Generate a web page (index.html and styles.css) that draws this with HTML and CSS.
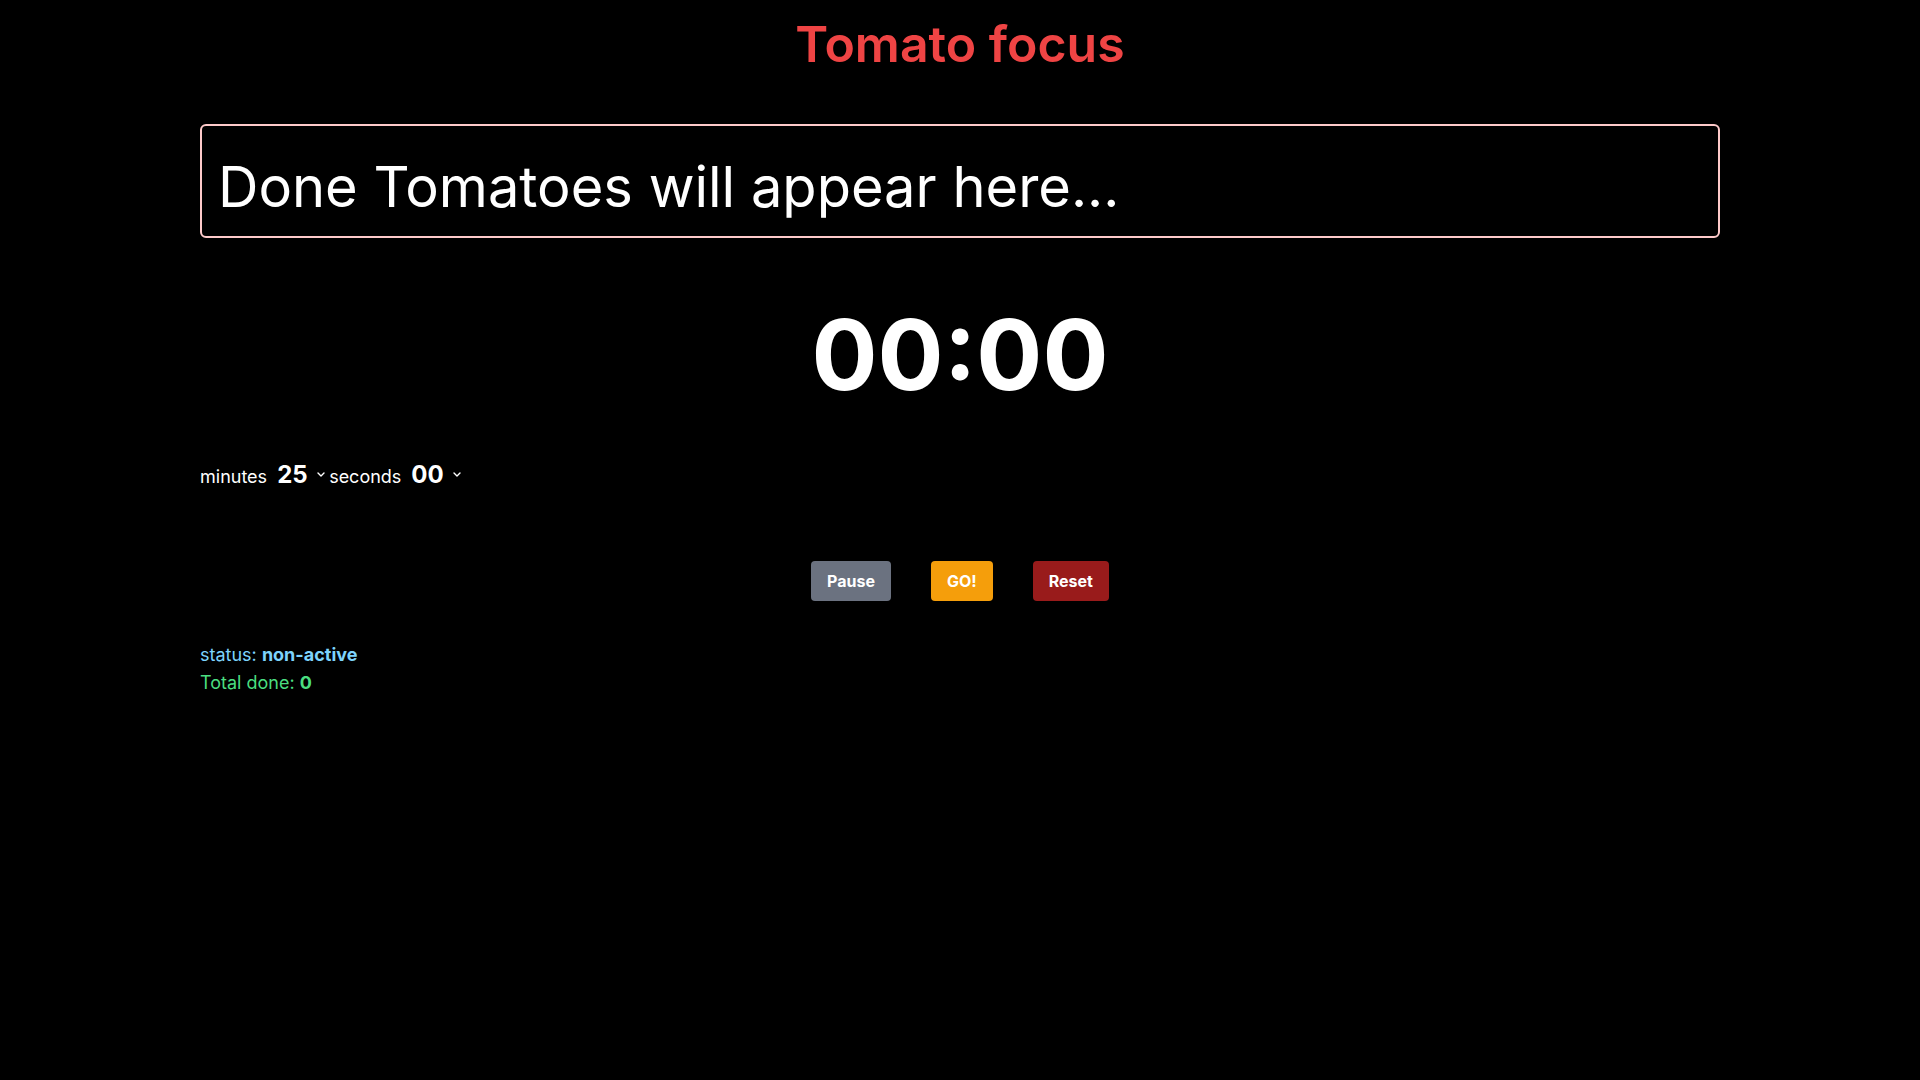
FILE: index.html
```html
<!DOCTYPE html>
<html lang="en">
<head>
<meta charset="utf-8">
<title>Tomato focus</title>
<link rel="stylesheet" href="styles.css">
</head>
<body>
<main class="page">
  <h1 class="title">Tomato focus</h1>
  <div class="done-box">Done Tomatoes will appear here...</div>
  <div class="timer">00:00</div>
  <div class="setters">
    <label class="lbl" for="min">minutes</label>
    <span class="sel-wrap">
      <select id="min" class="sel"><option>25</option></select>
      <svg class="chev" width="8" height="5" viewBox="0 0 8 5"><path d="M1 1l3 3 3-3" fill="none" stroke="#fff" stroke-width="1.4" stroke-linecap="round" stroke-linejoin="round"/></svg>
    </span>
    <label class="lbl" for="sec">seconds</label>
    <span class="sel-wrap">
      <select id="sec" class="sel"><option>00</option></select>
      <svg class="chev" width="8" height="5" viewBox="0 0 8 5"><path d="M1 1l3 3 3-3" fill="none" stroke="#fff" stroke-width="1.4" stroke-linecap="round" stroke-linejoin="round"/></svg>
    </span>
  </div>
  <div class="buttons">
    <button class="btn btn-pause">Pause</button>
    <button class="btn btn-go">GO!</button>
    <button class="btn btn-reset">Reset</button>
  </div>
  <div class="info">
    <p class="status">status: <b>non-active</b></p>
    <p class="total">Total done: <b>0</b></p>
  </div>
</main>
</body>
</html>
```
FILE: styles.css
```css
html, body {
  margin: 0;
  padding: 0;
  background: #000;
  color: #fff;
  font-family: Inter, "Noto Sans", sans-serif;
}
.page {
  width: 1520px;
  margin: 0 auto;
  padding-top: 19px;
}
.title {
  margin: 0;
  text-align: center;
  font-size: 50px;
  line-height: 51px;
  font-weight: 600;
  color: #ef4444;
}
.done-box {
  margin-top: 54px;
  box-sizing: content-box;
  height: 98px;
  padding: 12px 16px 0;
  border: 2px solid #fecaca;
  border-radius: 6px;
  font-size: 56px;
  line-height: 64px;
  display: flex;
  align-items: center;
}
.timer {
  margin-top: 68px;
  text-align: center;
  font-size: 98px;
  line-height: 98px;
  font-weight: 700;
}
.setters {
  margin-top: 55px;
  height: 32px;
  display: flex;
  align-items: baseline;
}
.lbl {
  font-size: 18px;
  line-height: 32px;
}
.sel-wrap {
  display: inline-flex;
  align-items: center;
  margin-left: 10px;
  margin-right: 4px;
}
.sel {
  appearance: none;
  -webkit-appearance: none;
  background: transparent;
  border: 0;
  color: #fff;
  font-family: inherit;
  font-size: 24px;
  line-height: 32px;
  font-weight: 700;
  padding: 0;
  margin: 0;
}
.chev {
  margin-left: 9px;
  position: relative;
  top: -1px;
}
.buttons {
  margin-top: 70px;
  display: flex;
  justify-content: center;
  gap: 40px;
}
.btn {
  border: 0;
  border-radius: 4px;
  color: #fff;
  font-family: inherit;
  font-size: 16px;
  line-height: 24px;
  font-weight: 700;
  padding: 8px 16px;
  height: 40px;
}
.btn-pause { background: #6b7280; }
.btn-go { background: #f59e0b; }
.btn-reset { background: #991b1b; }
.info {
  margin-top: 40px;
}
.info p {
  margin: 0;
  font-size: 18px;
  line-height: 28px;
}
.status { color: #7dd3fc; }
.total { color: #4ade80; }
```
